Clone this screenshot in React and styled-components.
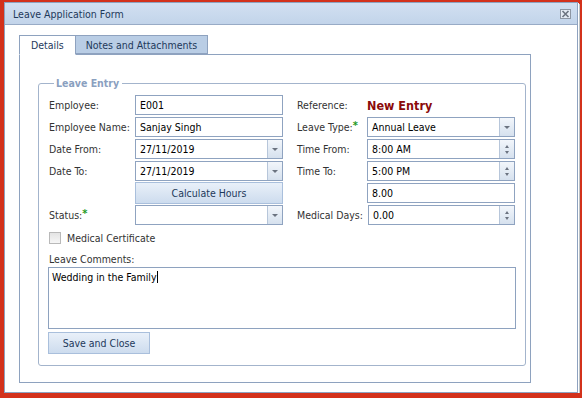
import React from 'react'
import styled, { createGlobalStyle, css } from 'styled-components'

const GlobalStyle = createGlobalStyle`
  html, body {
    margin: 0;
    background: #d3311b;
    font-family: 'DejaVu Sans', Verdana, sans-serif;
    font-stretch: condensed;
    font-size: 10.5px;
    color: #333;
  }
`

const Window = styled.div`
  box-sizing: border-box;
  width: 574px;
  height: 391px;
  margin: 2px 0 0 4px;
  background: #fff;
  border: 1px solid #8ea2bf;
  box-shadow: 1px 1px 0 #fff, 2px 2px 0 #bcc3c6;
`

const TitleBar = styled.div`
  height: 22px;
  box-sizing: border-box;
  display: flex;
  align-items: center;
  justify-content: space-between;
  padding: 0 6px 0 8px;
  background: linear-gradient(#d2e0f1, #c2d4ea);
  border-bottom: 1px solid #98abc6;
  color: #1e395b;
`

const Body = styled.div`
  padding: 10px 46px 0 14px;
`

const Tabs = styled.div`
  display: flex;
  height: 19px;
  position: relative;
  z-index: 1;
`

const Tab = styled.div`
  box-sizing: border-box;
  height: 20px;
  padding: 0 11px;
  display: flex;
  align-items: center;
  border: 1px solid #8ea2bf;
  color: #1e395b;
  ${(p) =>
    p.$active
      ? css`
          background: #fff;
          border-bottom-color: #fff;
        `
      : css`
          background: #b9cde5;
          border-left: none;
          height: 19px;
          padding: 0 10px;
        `}
`

const Panel = styled.div`
  box-sizing: border-box;
  height: 329px;
  border: 1px solid #8ea2bf;
  padding: 22px 4px 0 18px;
`

const Fieldset = styled.fieldset`
  margin: 0;
  padding: 6px 9px 11px 10px;
  border: 1px solid #a3b4cc;
  border-radius: 3px;
`

const Legend = styled.legend`
  padding: 0 3px 0 2px;
  margin-left: 5px;
  font-weight: bold;
  color: #8aa0bf;
`

const FormGrid = styled.div`
  display: grid;
  grid-template-columns: 86px 148px 84px 148px;
  grid-auto-rows: 20px;
  row-gap: 2px;
  align-items: center;
`

const Label = styled.span`
  padding-left: ${(p) => (p.$right ? '14px' : '0')};
  color: #333;
  white-space: nowrap;
`

const Req = styled.sup`
  color: #1f9a1f;
  font-size: 11px;
  font-weight: bold;
  vertical-align: top;
  line-height: 9px;
`

const RefValue = styled.span`
  font-weight: bold;
  font-size: 12.5px;
  color: #8b0a0a;
`

const Field = styled.div`
  box-sizing: border-box;
  height: 20px;
  display: flex;
  border: 1px solid #8fa3c0;
  background: #fff;
  grid-column: ${(p) => p.$col || 'auto'};
  margin-left: ${(p) => (p.$nudge ? '1px' : '0')};
`

const FieldText = styled.span`
  flex: 1;
  padding-left: 4px;
  line-height: 18px;
  color: #000;
`

const SideButton = styled.span`
  width: 14px;
  display: flex;
  flex-direction: column;
  align-items: center;
  justify-content: center;
  gap: 3px;
  border-left: 1px solid #b7c6da;
  background: linear-gradient(#f2f6fb, #d6e1ee);
`

const Arrow = styled.i`
  width: 0;
  height: 0;
  border-left: 3px solid transparent;
  border-right: 3px solid transparent;
  ${(p) =>
    p.$up
      ? css`border-bottom: 3px solid #6b7380;`
      : css`border-top: 3px solid #6b7380;`}
  ${(p) => p.$small && css`border-left-width: 2px; border-right-width: 2px;`}
`

const Button = styled.button`
  box-sizing: border-box;
  height: 22px;
  border: 1px solid #a9bfdc;
  background: linear-gradient(#e9f0f9, #cddcee);
  font-family: inherit;
  font-stretch: inherit;
  font-size: inherit;
  color: #1e395b;
  padding: 0;
  width: ${(p) => p.$width || 'auto'};
  margin-left: ${(p) => p.$shift || '0'};
  grid-column: ${(p) => p.$col || 'auto'};
`

const CheckRow = styled.label`
  display: flex;
  align-items: center;
  gap: 6px;
  margin-top: 6px;
  height: 14px;
`

const Box = styled.span`
  box-sizing: border-box;
  width: 12px;
  height: 12px;
  border: 1px solid #b9b9b9;
  background: linear-gradient(#e4e4e4, #f6f6f6);
`

const CommentsLabel = styled.div`
  margin-top: 8px;
  height: 13px;
  line-height: 13px;
`

const TextArea = styled.div`
  box-sizing: border-box;
  width: 468px;
  height: 62px;
  margin: 1px 0 3px -1px;
  border: 1px solid #8ea2bf;
  padding: 3px 3px;
  color: #000;
`

const Caret = styled.span`
  display: inline-block;
  width: 1px;
  height: 12px;
  background: #000;
  vertical-align: -2px;
`

const Dropdown = ({ value, col }) => (
  <Field $col={col}>
    <FieldText>{value}</FieldText>
    <SideButton>
      <Arrow />
    </SideButton>
  </Field>
)

const Spinner = ({ value, nudge }) => (
  <Field $nudge={nudge}>
    <FieldText>{value}</FieldText>
    <SideButton>
      <Arrow $up $small />
      <Arrow $small />
    </SideButton>
  </Field>
)

const TextBox = ({ value, col }) => (
  <Field $col={col}>
    <FieldText>{value}</FieldText>
  </Field>
)

const CloseIcon = () => (
  <svg width='11' height='10' viewBox='0 0 11 10'>
    <rect x='0.5' y='0.5' width='10' height='9' fill='#e4ebf4' stroke='#8d96a3' />
    <path d='M2.5 2 L8.5 8 M8.5 2 L2.5 8' stroke='#6c7480' strokeWidth='1.6' />
  </svg>
)

const App = () => {
  return (
    <>
      <GlobalStyle />
      <Window>
        <TitleBar>
          <span>Leave Application Form</span>
          <CloseIcon />
        </TitleBar>
        <Body>
          <Tabs>
            <Tab $active>Details</Tab>
            <Tab>Notes and Attachments</Tab>
          </Tabs>
          <Panel>
            <Fieldset>
              <Legend>Leave Entry</Legend>
              <FormGrid>
                <Label>Employee:</Label>
                <TextBox value='E001' />
                <Label $right>Reference:</Label>
                <RefValue>New Entry</RefValue>

                <Label>Employee Name:</Label>
                <TextBox value='Sanjay Singh' />
                <Label $right>
                  Leave Type:<Req>*</Req>
                </Label>
                <Dropdown value='Annual Leave' />

                <Label>Date From:</Label>
                <Dropdown value='27/11/2019' />
                <Label $right>Time From:</Label>
                <Spinner value='8:00 AM' />

                <Label>Date To:</Label>
                <Dropdown value='27/11/2019' />
                <Label $right>Time To:</Label>
                <Spinner value='5:00 PM' />

                <Button $col='2'>Calculate Hours</Button>
                <TextBox value='8.00' col='4' />

                <Label>
                  Status:<Req>*</Req>
                </Label>
                <Dropdown value='' />
                <Label $right>Medical Days:</Label>
                <Spinner value='0.00' nudge />
              </FormGrid>
              <CheckRow>
                <Box />
                Medical Certificate
              </CheckRow>
              <CommentsLabel>Leave Comments:</CommentsLabel>
              <TextArea>
                Wedding in the Family
                <Caret />
              </TextArea>
              <Button $width='102px' $shift='-1px'>
                Save and Close
              </Button>
            </Fieldset>
          </Panel>
        </Body>
      </Window>
    </>
  )
}

export default App
